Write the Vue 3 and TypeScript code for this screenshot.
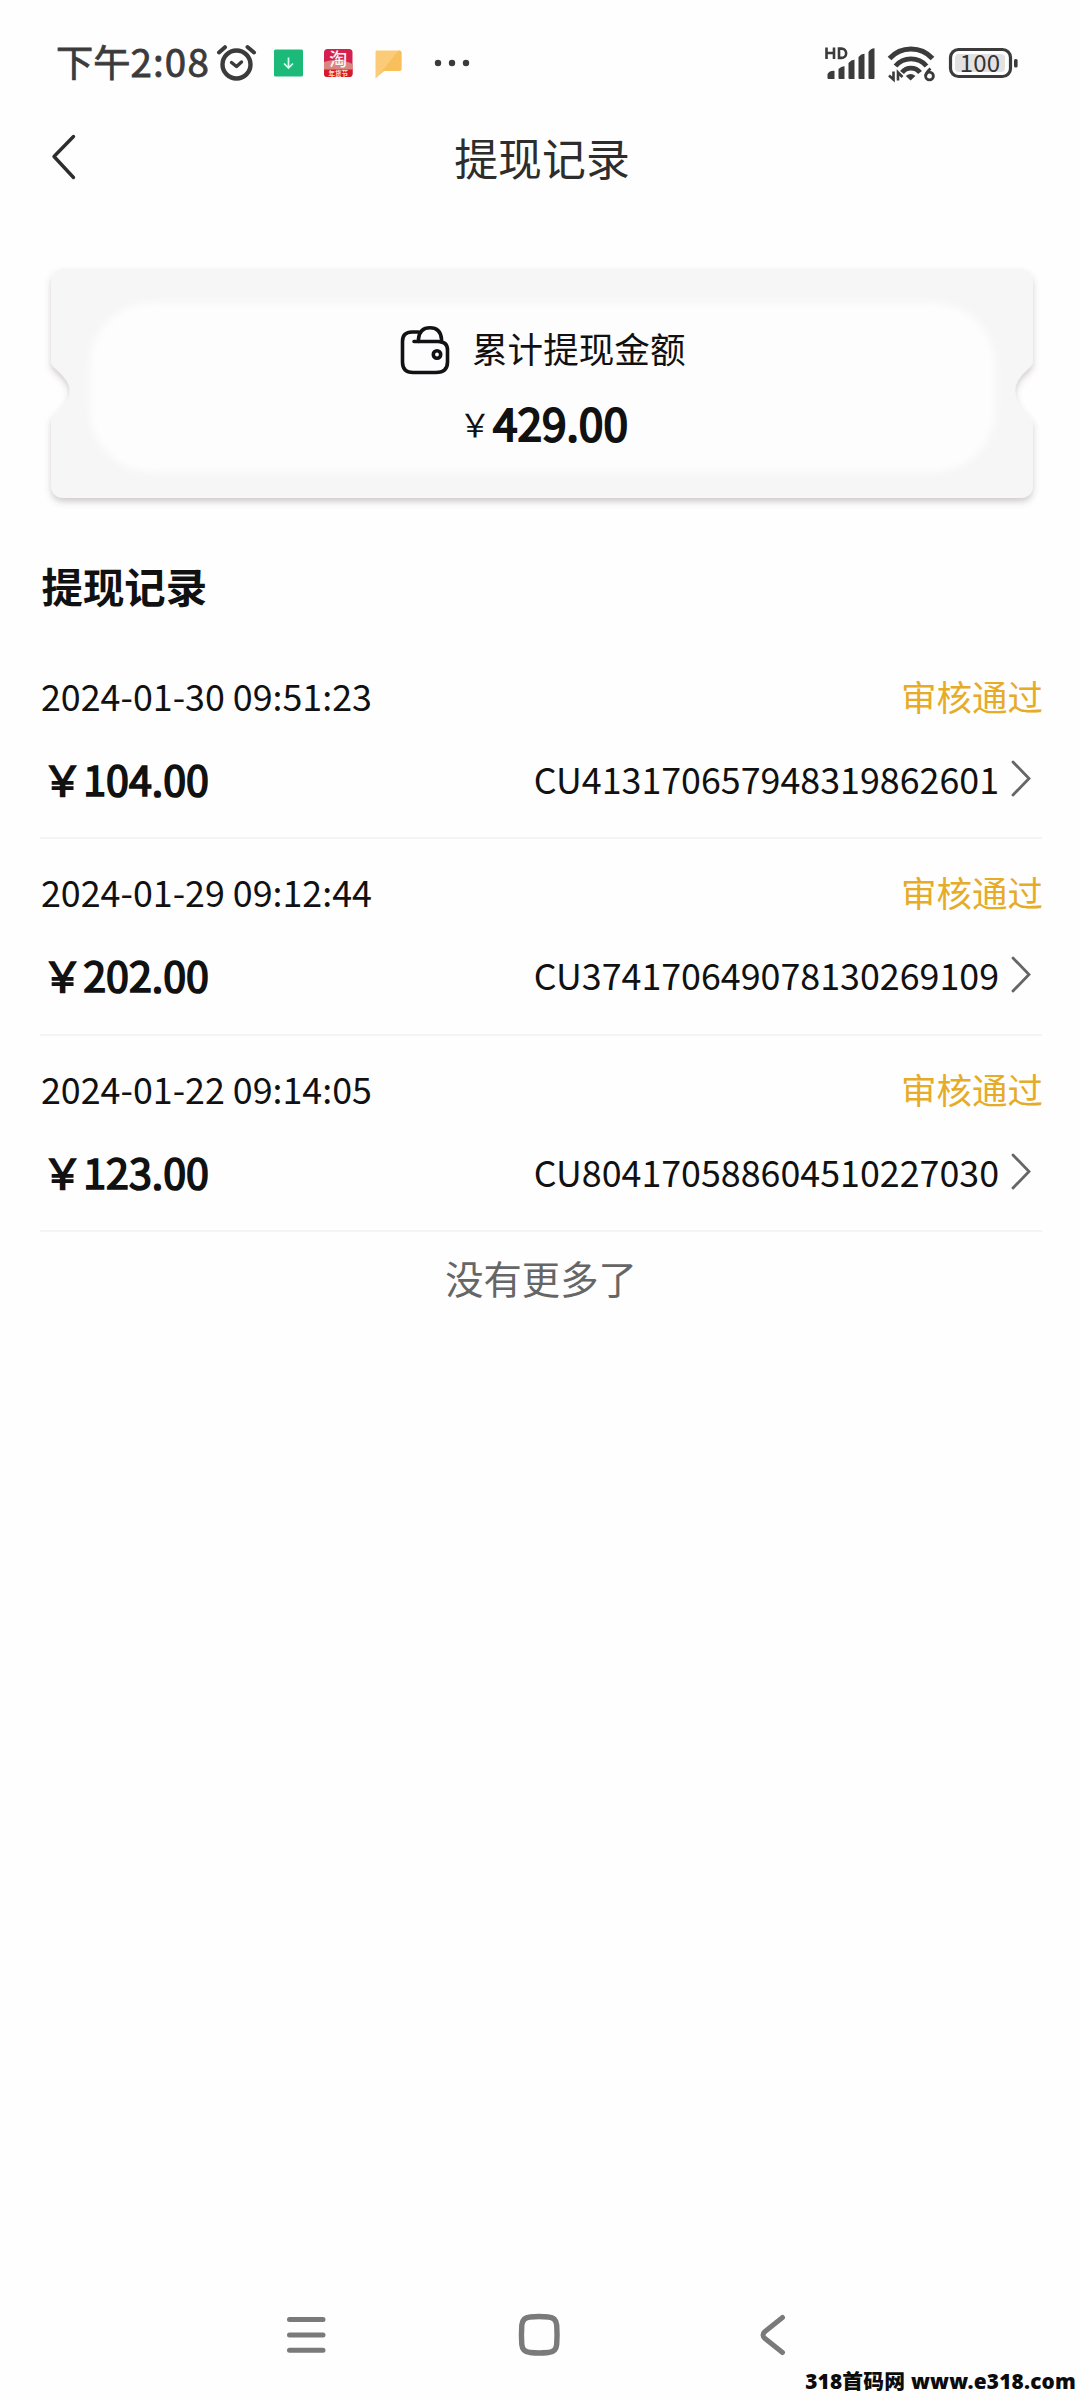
<script setup lang="ts">
interface WithdrawRecord {
  time: string
  status: string
  amount: string
  orderNo: string
}

const records: WithdrawRecord[] = [
  { time: '2024-01-30 09:51:23', status: '审核通过', amount: '104.00', orderNo: 'CU413170657948319862601' },
  { time: '2024-01-29 09:12:44', status: '审核通过', amount: '202.00', orderNo: 'CU374170649078130269109' },
  { time: '2024-01-22 09:14:05', status: '审核通过', amount: '123.00', orderNo: 'CU804170588604510227030' },
]
</script>

<template>
  <div class="screen">
    <header class="status">
      <div class="clock">下午<span>2:08</span></div>
      <svg class="notices" width="256" height="40" viewBox="216 43 256 40">
        <!-- alarm -->
        <g fill="none" stroke="#3b3b3b" stroke-linecap="round" stroke-linejoin="round">
          <circle cx="236.500" cy="64.500" r="14" stroke-width="4.400" />
          <path d="M231.500 62.500 236.500 66.500 241.500 62" stroke-width="3.400" />
          <path d="M219 52.500 225 47.200M247.500 47 254 52.500" stroke-width="4" />
        </g>
        <!-- download -->
        <rect x="274" y="49.500" width="29" height="27" rx="1.500" fill="#1cba79" />
        <path d="M288.500 57.500v10M284 63.500l4.500 4.500 4.500-4.500" fill="none" stroke="#d9fff0" stroke-width="1.700" />
        <!-- shopping app -->
        <rect x="324" y="49" width="28.500" height="28" rx="3.500" fill="#d3204f" />
        <path d="M324 62q14-5 28.500 2v6H324z" fill="#d98580" />
        <path d="M324 69.500h28.500v4a3.500 3.500 0 0 1-3.500 3.500h-21.500a3.500 3.500 0 0 1-3.500-3.500z" fill="#d61a2a" />
        <text x="338.200" y="65.500" text-anchor="middle" font-size="18" font-weight="500" fill="#fff3f1">淘</text>
        <text x="338.200" y="76" text-anchor="middle" font-size="6.500" font-weight="700" fill="#ffe0d0">年货节</text>
        <!-- message -->
        <path d="M376.500 50.500h23q2 0 2 2V69q0 2-2 2H384l-8.500 7.500v-26q0-2 1-2z" fill="#fbcb77" />
        <path d="M398.500 50.500q3 0 3 2V69q0 2-2 2H384l-5 4z" fill="#f8bb55" opacity=".8" />
        <g fill="#3b3b3b"><circle cx="438" cy="63" r="3.200" /><circle cx="452" cy="63" r="3.200" /><circle cx="466" cy="63" r="3.200" /></g>
      </svg>
      <svg class="system" width="196" height="40" viewBox="824 43 196 40">
        <g fill="none" stroke="#3b3b3b" stroke-width="2.600">
          <path d="M826.500 47.500v11.500M834 47.500v11.500M826.500 53h7.500M839 48.600h2.500a4.600 4.600 0 0 1 0 9.300H839z" />
        </g>
        <g fill="#3b3b3b">
          <path d="M827.500 75.500q-.5-3 4-4.500 3-.5 3 0v8h-6q-1 0-1-1z" />
          <path d="M838.500 69q3-3 6-2.700V79h-5q-1 0-1-1z" />
          <path d="M848.500 63q3-3.500 6-3.300V79h-5q-1 0-1-1z" />
          <path d="M858.500 57q3-3.500 6-3.300V79h-5q-1 0-1-1z" />
          <path d="M868.500 52q2-3.500 6-3.700V78q0 1-1 1h-4q-1 0-1-1z" />
        </g>
        <g fill="none" stroke="#3b3b3b" stroke-width="4.900">
          <path d="M889.500 58.500a29 29 0 0 1 43 0" />
          <path d="M895.500 66a20.500 20.500 0 0 1 31 0" />
          <path d="M902 72.500a11.500 11.500 0 0 1 18 0" />
        </g>
        <path d="M905.800 76q5-4 9.600 0l-4.800 4.500z" fill="#3b3b3b" />
        <path d="M893.500 71.500v8l-4.500-4M898 80.500v-8l4.500 4.500" fill="none" stroke="#3b3b3b" stroke-width="2.600" />
        <path d="M930.500 68.500q-4.500 4-4.800 7.500" fill="none" stroke="#3b3b3b" stroke-width="2.800" />
        <circle cx="929.500" cy="76" r="3.900" fill="none" stroke="#3b3b3b" stroke-width="2.800" />
        <rect x="950.500" y="49.500" width="60" height="27" rx="8" fill="#fff" stroke="#3b3b3b" stroke-width="3.200" />
        <rect x="955" y="54" width="50" height="18" rx="4" fill="#e2e2e2" />
        <rect x="1014" y="59" width="3.600" height="8.500" rx="1.500" fill="#3b3b3b" />
        <text x="980" y="71.800" text-anchor="middle" font-size="24" letter-spacing=".1" fill="#333">100</text>
      </svg>
    </header>

    <nav class="titlebar">
      <svg class="back" width="26" height="48" viewBox="0 0 26 48">
        <path d="M23.500 3.500 4 23.500l19.500 21" fill="none" stroke="#2d2d2d" stroke-width="3.400" stroke-linecap="round" stroke-linejoin="round" />
      </svg>
      <h1>提现记录</h1>
    </nav>

    <section class="ticket">
      <svg class="ticket-bg" width="1024" height="269" viewBox="0 0 1024 269">
        <defs>
          <filter id="drop" x="-5%" y="-10%" width="110%" height="125%">
            <feDropShadow dx="0" dy="4" stdDeviation="3" flood-color="#5a4a55" flood-opacity=".27" />
          </filter>
          <filter id="soft" x="-5%" y="-15%" width="110%" height="130%">
            <feGaussianBlur stdDeviation="3.500" />
          </filter>
        </defs>
        <path
          filter="url(#drop)"
          fill="#f7f6f7"
          d="M35 20H989q14 0 14 14V112q0 4-5 8-13 11-13 22t13 24q5 4 5 9v60q0 14-14 14H35q-14 0-14-14v-62q0-5 5-9 14-12 14-22t-14-22q-5-4-5-8V34q0-14 14-14z"
        />
        <rect x="60" y="54" width="905" height="169" rx="62" fill="#fefdfe" filter="url(#soft)" />
      </svg>
      <div class="ticket-head">
        <svg width="50" height="50" viewBox="0 0 50 50" fill="none" stroke="#121214" stroke-width="3.600" stroke-linecap="round" stroke-linejoin="round">
          <path d="M18.500 7H12Q2.500 7 2.500 16.500V37Q2.500 47.500 13 47.500H36Q47.500 47.500 47.500 37V25Q47.500 16.500 38 16.500H14" />
          <path d="M18.500 16.500V14Q19.500 2.800 30 2.800T41.500 14v3" />
          <circle cx="37" cy="29.500" r="3.700" />
        </svg>
        <span>累计提现金额</span>
      </div>
      <div class="total"><i>￥</i><b>429.00</b></div>
    </section>

    <h2>提现记录</h2>

    <ul class="records">
      <li v-for="r in records" :key="r.orderNo">
        <div class="line">
          <span>{{ r.time }}</span>
          <span class="state">{{ r.status }}</span>
        </div>
        <div class="line">
          <span class="amount">￥{{ r.amount }}</span>
          <span class="order">
            {{ r.orderNo }}
            <svg width="22" height="38" viewBox="0 0 22 38">
              <path d="M3 3 19 19.500 3 36" fill="none" stroke="#666" stroke-width="2.800" stroke-linecap="round" />
            </svg>
          </span>
        </div>
      </li>
    </ul>
    <p class="end">没有更多了</p>

    <footer class="keys">
      <svg width="510" height="50" viewBox="280 2310 510 50" fill="none" stroke="#7a7a7a" stroke-width="5" stroke-linecap="round" stroke-linejoin="round">
        <path d="M289.500 2319.500h33.500M289.500 2335h33.500M289.500 2350.300h33.500" />
        <path stroke-width="5.400" d="M530 2317q9-1 18.500 0 7.500.5 8.200 8 .7 10 0 19.500-.7 7.500-8.200 8-9.500 1-18.500 0-7.500-.5-8.200-8-.7-9.500 0-19.500.7-7.500 8.200-8z" />
        <path d="M782.500 2317.500 765 2331.500q-4 3.500 0 7l17.500 14" />
      </svg>
    </footer>
    <div class="site">318<span>首码网</span> www.e318.com</div>
  </div>
</template>

<style>
body {
  background: #fefefe;
}
</style>

<style scoped>
.screen {
  position: relative;
  display: flex;
  flex-direction: column;
  width: 1080px;
  height: 2400px;
  overflow: hidden;
  background: #fefefe;
  color: #111;
  font-family: 'Noto Sans CJK SC', 'Noto Sans', sans-serif;
}
h1,
h2,
p,
ul {
  margin: 0;
  padding: 0;
}
.status {
  display: flex;
  align-items: center;
  flex: none;
  height: 121px;
  padding: 0 60px 0 56px;
}
.clock {
  width: 160px;
  font-size: 37.2px;
  line-height: 121px;
  color: #3b3b3b;
  white-space: nowrap;
  -webkit-text-stroke: 0.8px #3b3b3b;
}
.clock span {
  font-size: 38.5px;
  letter-spacing: 1.2px;
}
.notices,
.system {
  position: relative;
  top: 2.5px;
}
.system {
  margin-left: auto;
}
.titlebar {
  position: relative;
  display: flex;
  align-items: center;
  justify-content: center;
  flex: none;
  height: 71px;
}
.back {
  position: absolute;
  left: 49.5px;
  top: 12px;
}
h1 {
  font-size: 43.9px;
  font-weight: 400;
  line-height: 71px;
  color: #2d2d2d;
  margin: 2px 0 0 4px;
}
.ticket {
  position: relative;
  flex: none;
  height: 229px;
  margin: 77px 47px 0 51px;
}
.ticket-bg {
  position: absolute;
  left: -21px;
  top: -20px;
}
.ticket-head {
  position: relative;
  display: flex;
  align-items: center;
  gap: 22px;
  height: 50px;
  padding: 56px 0 0 349px;
  font-size: 35.6px;
  line-height: 50px;
}
.ticket-head span {
  margin-top: -5px;
}
.total {
  position: relative;
  display: flex;
  align-items: flex-start;
  padding-left: 408px;
  margin-top: 17px;
  line-height: 60px;
}
.total i {
  width: 34px;
  font-size: 32px;
  font-style: normal;
  line-height: 62px;
}
.total b {
  font-size: 44.2px;
  font-weight: 400;
  line-height: 61px;
  -webkit-text-stroke: 2px #111;
}
h2 {
  margin: 56.5px 0 0 41.5px;
  font-size: 41.4px;
  font-weight: 700;
  line-height: 60px;
}
.records {
  list-style: none;
  margin: 28px 38px 0 40px;
}
.records li {
  display: flex;
  flex-direction: column;
  gap: 33px;
  box-sizing: border-box;
  height: 196.5px;
  padding: 28px 0 0 1px;
  border-bottom: 2px solid #f4f4f4;
}
.line {
  display: flex;
  justify-content: space-between;
  height: 50px;
  font-size: 35.8px;
  line-height: 48.5px;
}
.state {
  font-size: 35.5px;
  line-height: 50px;
  margin-right: -1px;
  color: #e6ab27;
}
.amount {
  font-size: 41.2px;
  line-height: 49px;
  margin-left: 1px;
  -webkit-text-stroke: 1.7px #111;
}
.order {
  display: flex;
  align-items: center;
  height: 48.5px;
  gap: 10.5px;
  padding-right: 10.5px;
}
.end {
  margin: 16px 0 0 2px;
  font-size: 38.3px;
  line-height: 60px;
  text-align: center;
  color: #666;
}
.keys {
  display: flex;
  margin-top: auto;
  padding: 0 0 40px 280px;
}
.site {
  position: absolute;
  right: 4px;
  bottom: 4px;
  font-family: 'Noto Sans', 'Noto Sans CJK SC', sans-serif;
  font-size: 20.8px;
  letter-spacing: 0.2px;
  font-weight: 900;
  line-height: 30px;
  color: #0c0c0c;
  white-space: nowrap;
}
</style>
